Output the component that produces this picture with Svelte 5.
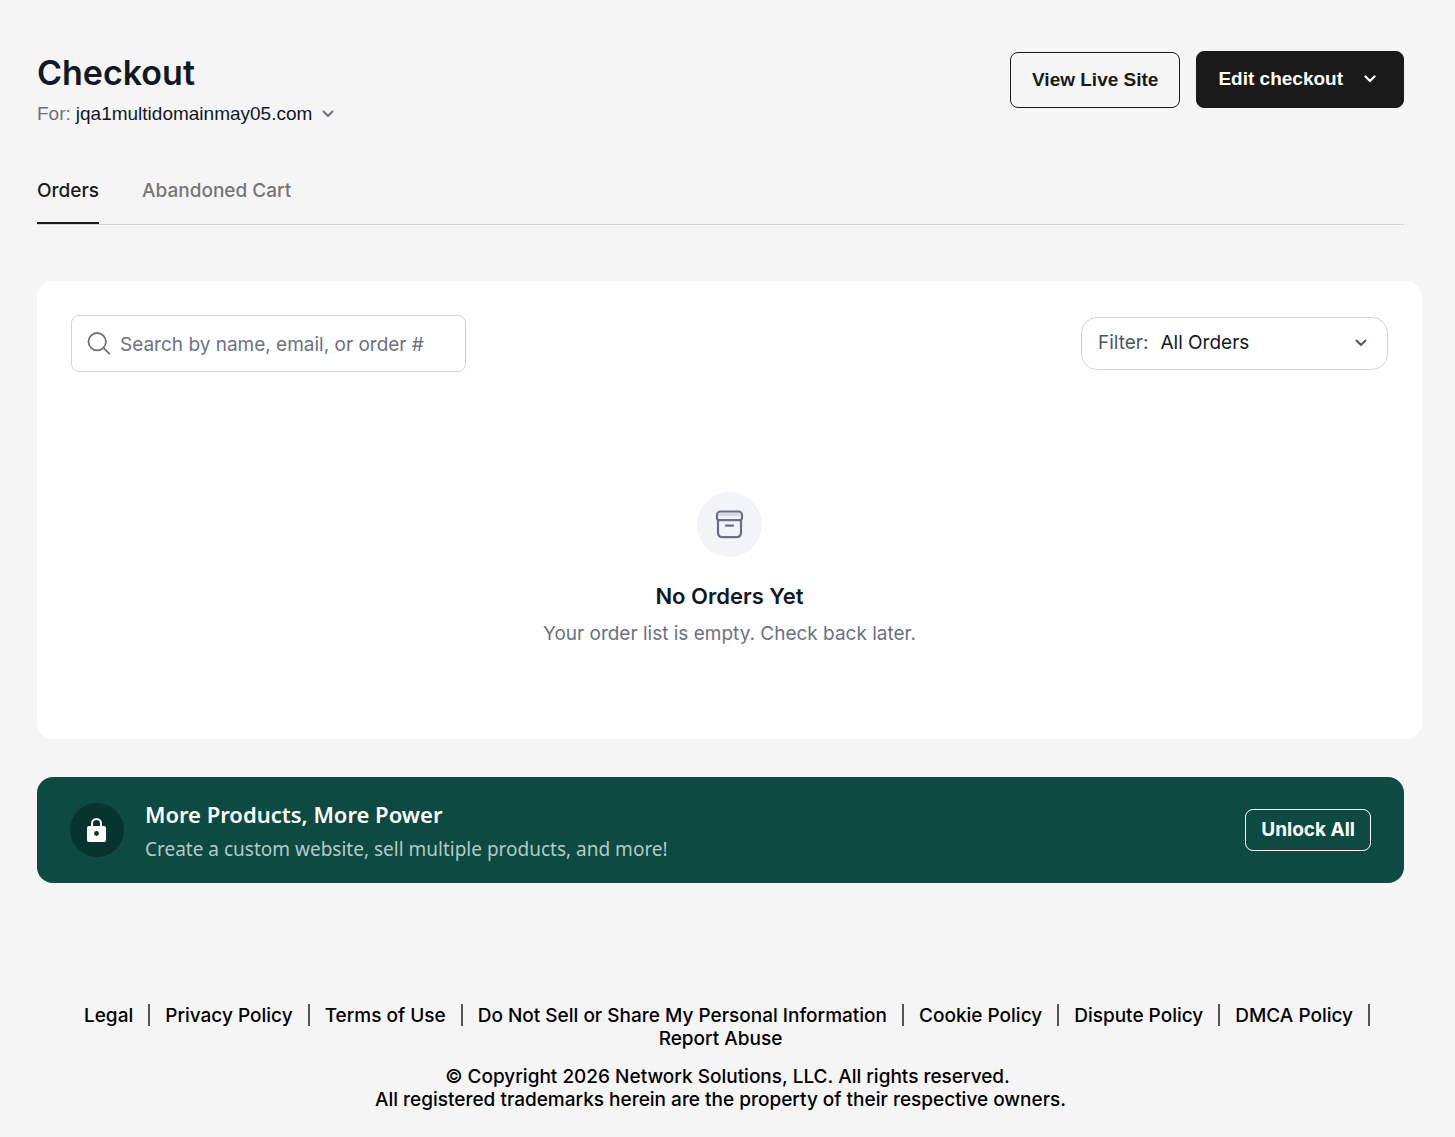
<script lang="ts">
	let activeTab = $state('orders');
	let search = $state('');
	let filter = $state('all');

	const tabs = [
		{ id: 'orders', label: 'Orders' },
		{ id: 'abandoned', label: 'Abandoned Cart' }
	];

	const footerLinks = [
		'Legal',
		'Privacy Policy',
		'Terms of Use',
		'Do Not Sell or Share My Personal Information',
		'Cookie Policy',
		'Dispute Policy',
		'DMCA Policy',
		'Report Abuse'
	];
</script>

{#snippet chevron(width: number)}
	<svg
		class="chevron"
		width="12"
		height="8"
		viewBox="0 0 12 8"
		fill="none"
		stroke="currentColor"
		stroke-width={width}
		stroke-linecap="round"
		stroke-linejoin="round"
		aria-hidden="true"
	>
		<path d="m1.5 1.5 4.5 4.5 4.5-4.5" />
	</svg>
{/snippet}

<div class="page">
	<header class="page-header">
		<div>
			<h1>Checkout</h1>
			<button class="domain" type="button">
				<span class="domain-label">For:</span>
				<span>jqa1multidomainmay05.com</span>
				{@render chevron(2)}
			</button>
		</div>
		<div class="actions">
			<button class="btn btn-outline" type="button">View Live Site</button>
			<button class="btn btn-dark" type="button">
				Edit checkout
				{@render chevron(2.2)}
			</button>
		</div>
	</header>

	<div class="tabs" role="tablist">
		{#each tabs as tab (tab.id)}
			<button
				class="tab"
				class:active={activeTab === tab.id}
				type="button"
				role="tab"
				aria-selected={activeTab === tab.id}
				onclick={() => (activeTab = tab.id)}
			>
				{tab.label}
			</button>
		{/each}
	</div>

	<main class="card">
		<div class="toolbar">
			<label class="search">
				<svg
					width="24"
					height="24"
					viewBox="0 0 24 24"
					fill="none"
					stroke="currentColor"
					stroke-width="1.8"
					stroke-linecap="round"
					aria-hidden="true"
				>
					<circle cx="10.2" cy="9.7" r="8.7" />
					<path d="m16.700 16.200 5.500 5.500" />
				</svg>
				<input
					type="text"
					aria-label="Search orders"
					placeholder="Search by name, email, or order #"
					bind:value={search}
				/>
			</label>
			<div class="filter">
				<label for="order-filter">Filter:</label>
				<select id="order-filter" bind:value={filter}>
					<option value="all">All Orders</option>
				</select>
				{@render chevron(1.8)}
			</div>
		</div>

		<section class="empty">
			<div class="empty-icon">
				<svg width="29" height="30" viewBox="0 0 29 30" fill="none" aria-hidden="true">
					<path d="M4 6V5a2.500 2.500 0 0 1 2.500-2.500h16A2.500 2.500 0 0 1 25 5v1z" fill="#d6d8df" />
					<path
						d="M5.500 1.500h18a3.500 3.500 0 0 1 3.500 3.500v2.500c0 1.700-.8 2.700-2 2.700H4c-1.200 0-2-1-2-2.700V5a3.500 3.500 0 0 1 3.500-3.500zM3 10.200v12.300c0 3 1.800 4.700 4.500 4.700h14c2.700 0 4.500-1.700 4.500-4.700V10.200M11 15.700h7"
						stroke="#697084"
						stroke-width="2.2"
						stroke-linecap="round"
						stroke-linejoin="round"
					/>
				</svg>
			</div>
			<h2>No Orders Yet</h2>
			<p>Your order list is empty. Check back later.</p>
		</section>
	</main>

	<aside class="promo">
		<div class="promo-icon">
			<svg width="20" height="26" viewBox="0 0 20 26" aria-hidden="true">
				<path d="M5 10V6.500a4.500 4.500 0 0 1 9 0V10" fill="none" stroke="#fff" stroke-width="2" />
				<rect x="0" y="9" width="19" height="16" rx="2" fill="#fff" />
				<circle cx="9.500" cy="16.500" r="2.400" fill="#08342f" />
			</svg>
		</div>
		<div class="promo-text">
			<h3>More Products, More Power</h3>
			<p>Create a custom website, sell multiple products, and more!</p>
		</div>
		<button class="unlock" type="button">Unlock All</button>
	</aside>

	<footer>
		<ul class="footer-links">
			{#each footerLinks as link (link)}
				<li><a href="#{link.toLowerCase().replaceAll(' ', '-')}">{link}</a></li>
			{/each}
		</ul>
		<p>© Copyright 2026 Network Solutions, LLC. All rights reserved.</p>
		<p class="trademarks">
			All registered trademarks herein are the property of their respective owners.
		</p>
	</footer>
</div>

<style>
	:global(body) {
		background: #f5f5f5;
	}

	.page {
		padding: 51px 51px 26px 37px;
		color: #111827;
		font-family: Inter, sans-serif;
		font-size: 19px;
		line-height: 23px;
	}

	h1,
	h2,
	h3,
	p,
	ul {
		margin: 0;
		padding: 0;
	}

	button,
	input,
	select {
		margin: 0;
		font: inherit;
	}

	button {
		cursor: pointer;
	}

	.chevron {
		flex: none;
	}

	.page-header {
		display: flex;
		align-items: flex-start;
		justify-content: space-between;
	}

	h1 {
		font-size: 34px;
		font-weight: 600;
		line-height: 44px;
	}

	.domain {
		display: flex;
		align-items: center;
		gap: 5px;
		margin-top: 7px;
		padding: 0;
		border: none;
		background: none;
		color: #111827;
		font-family: 'Liberation Sans', sans-serif;
	}

	.domain .chevron {
		margin-left: 5px;
		color: #6b7280;
	}

	.domain-label {
		color: #6b7280;
	}

	.actions {
		display: flex;
		align-items: flex-end;
		gap: 16px;
	}

	.btn {
		display: flex;
		align-items: center;
		height: 57px;
		padding: 0 21px 2px;
		border: 1px solid #1a1a1a;
		border-radius: 8px;
		font-family: 'Liberation Sans', sans-serif;
		font-weight: 700;
	}

	.btn-outline {
		height: 56px;
		background: none;
		color: #1a1a1a;
	}

	.btn-dark {
		gap: 21px;
		padding-right: 27px;
		background: #1a1a1a;
		color: #fff;
	}

	.tabs {
		display: flex;
		gap: 43px;
		margin-top: 54px;
		border-bottom: 1px solid #d1d5db;
	}

	.tab {
		padding: 0 0 20px;
		border: none;
		border-bottom: 2px solid transparent;
		background: none;
		color: #757575;
		font-weight: 500;
	}

	.tab.active {
		border-color: #1a1a1a;
		color: #1a1a1a;
	}

	.card {
		margin: 56px -18px 0 0;
		padding: 34px 34px 94px;
		border-radius: 16px;
		background: #fff;
	}

	.toolbar {
		display: flex;
		align-items: center;
		justify-content: space-between;
	}

	.search {
		display: flex;
		align-items: center;
		gap: 9px;
		box-sizing: border-box;
		width: 395px;
		height: 57px;
		padding: 0 15px;
		border: 1px solid #d1d5db;
		border-radius: 8px;
		color: #6b7280;
	}

	.search svg {
		flex: none;
	}

	.search input {
		flex: 1;
		min-width: 0;
		padding: 2px 0 0;
		border: none;
		outline: none;
		background: none;
		color: #111827;
	}

	.search input::placeholder {
		color: #6b7280;
		opacity: 1;
	}

	.filter {
		display: flex;
		align-items: center;
		gap: 12px;
		box-sizing: border-box;
		width: 307px;
		height: 53px;
		padding: 0 20px 2px 16px;
		border: 1px solid #d1d5db;
		border-radius: 16px;
		color: #4b5563;
	}

	.filter select {
		flex: 1;
		padding: 0;
		border: none;
		outline: none;
		appearance: none;
		background: none;
		color: #111827;
	}

	.empty {
		display: flex;
		flex-direction: column;
		align-items: center;
		padding-top: 120px;
		text-align: center;
	}

	.empty-icon {
		display: flex;
		align-items: center;
		justify-content: center;
		width: 65px;
		height: 65px;
		border-radius: 50%;
		background: #f3f4f8;
	}

	h2 {
		margin-top: 25px;
		font-size: 22px;
		font-weight: 600;
		line-height: 28px;
	}

	.empty p {
		margin-top: 12px;
		color: #6b7280;
	}

	.promo {
		display: flex;
		align-items: center;
		gap: 21px;
		margin-top: 38px;
		padding: 20px 33px;
		border-radius: 16px;
		background: #0c4a42;
		color: #fff;
		font-family: 'Noto Sans', sans-serif;
	}

	.promo-icon {
		display: flex;
		flex: none;
		align-items: center;
		justify-content: center;
		width: 54px;
		height: 54px;
		border-radius: 50%;
		background: #08342f;
	}

	.promo-text {
		flex: 1;
	}

	h3 {
		font-size: 22px;
		font-weight: 600;
		line-height: 34px;
	}

	.promo p {
		margin-top: 4px;
		color: #b6c9c6;
		line-height: 28px;
	}

	.unlock {
		height: 42px;
		padding: 0 15px 2px;
		border: 1px solid #fff;
		border-radius: 8px;
		background: none;
		color: #fff;
		font-family: Inter, sans-serif;
		font-weight: 700;
	}

	footer {
		margin: 121px -14px 0 0;
		color: #000;
		font-weight: 500;
		text-align: center;
	}

	.footer-links {
		margin-bottom: 15px;
		list-style: none;
	}

	.footer-links li {
		display: inline;
	}

	.footer-links li:first-child {
		padding-left: 14px;
	}

	.footer-links li:last-child {
		padding-right: 14px;
	}

	.footer-links li:not(:last-child)::after {
		content: '';
		display: inline-block;
		width: 2px;
		height: 22px;
		margin: 0 15px;
		background: #555;
		vertical-align: -4px;
	}

	footer a {
		color: inherit;
		text-decoration: none;
		white-space: nowrap;
	}

	.trademarks {
		padding-right: 14px;
	}
</style>
